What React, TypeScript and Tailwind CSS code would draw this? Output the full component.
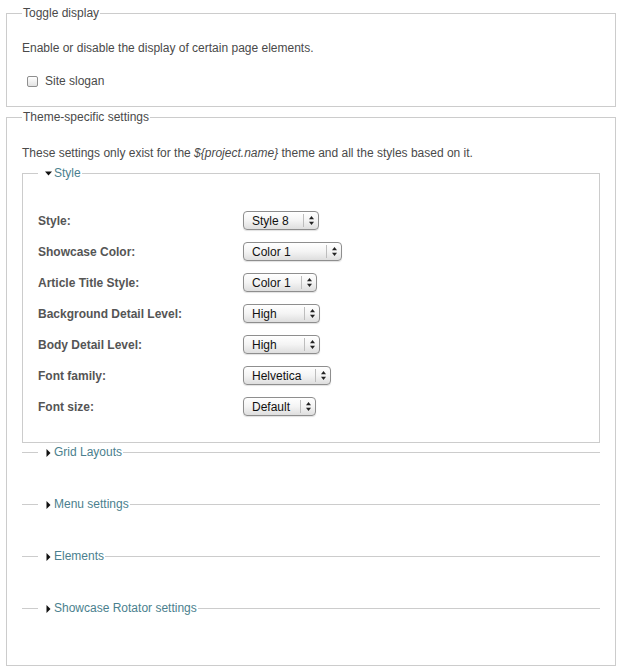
import React from "react";

const rows = [
  { label: "Style:", value: "Style 8", width: 76 },
  { label: "Showcase Color:", value: "Color 1", width: 99 },
  { label: "Article Title Style:", value: "Color 1", width: 74 },
  { label: "Background Detail Level:", value: "High", width: 77 },
  { label: "Body Detail Level:", value: "High", width: 77 },
  { label: "Font family:", value: "Helvetica", width: 88 },
  { label: "Font size:", value: "Default", width: 73 },
];

const collapsed = ["Grid Layouts", "Menu settings", "Elements", "Showcase Rotator settings"];

function Arrows() {
  return (
    <svg width="5" height="9" viewBox="0 0 5 9" className="block">
      <path d="M2.5 0 L5 3.2 L0 3.2 Z" fill="#222" />
      <path d="M0 5.8 L5 5.8 L2.5 9 Z" fill="#222" />
    </svg>
  );
}

function FakeSelect({ value, width }: { value: string; width: number }) {
  return (
    <div
      className="flex h-[19px] items-center rounded-[4px] border border-[#8e8e8e] bg-linear-to-b from-white via-[#f4f4f4] to-[#dedede] shadow-[0_1px_1px_rgba(0,0,0,0.12)]"
      style={{ width }}
    >
      <span className="flex-1 pl-[8px] text-[12px] leading-none text-[#111]">{value}</span>
      <div className="flex h-[13px] w-[15px] items-center justify-center border-l border-[#bdbdbd]">
        <Arrows />
      </div>
    </div>
  );
}

function Triangle({ open }: { open: boolean }) {
  return open ? (
    <svg width="7" height="5" viewBox="0 0 7 5" className="mr-[2px] inline-block align-middle">
      <path d="M0 0.5 L7 0.5 L3.5 4.5 Z" fill="#111" />
    </svg>
  ) : (
    <svg width="5" height="8" viewBox="0 0 5 8" className="mr-[3px] inline-block align-middle">
      <path d="M0.5 0 L4.5 4 L0.5 8 Z" fill="#111" />
    </svg>
  );
}

export default function App() {
  return (
    <div className="min-h-[667px] bg-white pt-[6px] pl-[6px] pr-[3px] font-['Liberation_Sans',Arial,sans-serif] text-[12px] text-[#4a4a4a]">
      {/* Toggle display */}
      <fieldset className="mb-[3px] border border-[#cccccc] px-[15px] pt-[21px] pb-[18px]">
        <legend className="px-[1px] leading-[14px] text-[#4a4a4a]">Toggle display</legend>
        <p className="leading-[14px]">Enable or disable the display of certain page elements.</p>
        <label className="mt-[19px] ml-[5px] flex h-[14px] items-center gap-[7px]">
          <span className="inline-block h-[11px] w-[11px] rounded-[2px] border border-[#8f8f8f] bg-linear-to-b from-white to-[#e3e3e3]" />
          <span>Site slogan</span>
        </label>
      </fieldset>

      {/* Theme-specific settings */}
      <fieldset className="border border-[#cccccc] px-[15px] pt-[22px] pb-[14px]">
        <legend className="px-[1px] leading-[14px] text-[#4a4a4a]">Theme-specific settings</legend>
        <p className="leading-[14px]">
          These settings only exist for the <em>{"${project.name}"}</em> theme and all the styles based on it.
        </p>

        <fieldset className="mt-[6px] border border-[#cccccc] px-[15px] pt-[25px] pb-[20px]">
          <legend className="pl-[7px] pr-[1px] leading-[14px] text-[#4b7f8e]">
            <Triangle open />
            Style
          </legend>
          {rows.map((r) => (
            <div key={r.label} className="flex h-[31px] items-center">
              <span className="w-[205px] font-bold text-[#555555]">{r.label}</span>
              <FakeSelect value={r.value} width={r.width} />
            </div>
          ))}
        </fieldset>

        {collapsed.map((name) => (
          <fieldset key={name} className="mt-[2px] h-[50px] border-0 border-t border-[#cccccc] pl-[16px]">
            <legend className="pl-[8px] pr-[1px] leading-[14px] text-[#4b7f8e]">
              <Triangle open={false} />
              {name}
            </legend>
          </fieldset>
        ))}
      </fieldset>
    </div>
  );
}
